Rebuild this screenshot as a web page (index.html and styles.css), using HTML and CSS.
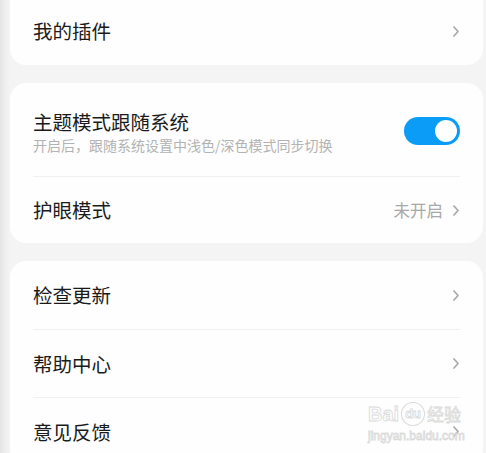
FILE: index.html
```html
<!DOCTYPE html>
<html lang="zh">
<head>
<meta charset="utf-8">
<link rel="stylesheet" href="styles.css">
</head>
<body>
<div class="page">
  <section class="card card-first">
    <div class="row">
      <span class="label">我的插件</span>
      <svg class="chev" viewBox="0 0 6 11" width="6" height="11"><polyline points="1,1 5,5.5 1,10"/></svg>
    </div>
  </section>

  <section class="card">
    <div class="row row-tall">
      <div class="texts">
        <span class="label">主题模式跟随系统</span>
        <span class="sub">开启后，跟随系统设置中浅色/深色模式同步切换</span>
      </div>
      <div class="toggle"><div class="knob"></div></div>
    </div>
    <div class="row">
      <span class="label">护眼模式</span>
      <div class="right">
        <span class="value">未开启</span>
        <svg class="chev" viewBox="0 0 6 11" width="6" height="11"><polyline points="1,1 5,5.5 1,10"/></svg>
      </div>
    </div>
  </section>

  <section class="card">
    <div class="row">
      <span class="label">检查更新</span>
      <svg class="chev" viewBox="0 0 6 11" width="6" height="11"><polyline points="1,1 5,5.5 1,10"/></svg>
    </div>
    <div class="row">
      <span class="label">帮助中心</span>
      <svg class="chev" viewBox="0 0 6 11" width="6" height="11"><polyline points="1,1 5,5.5 1,10"/></svg>
    </div>
    <div class="row">
      <span class="label">意见反馈</span>
      <svg class="chev" viewBox="0 0 6 11" width="6" height="11"><polyline points="1,1 5,5.5 1,10"/></svg>
    </div>
  </section>
</div>
<div class="watermark">
  <div class="wm-top"><span class="wm-bai">Bai</span><span class="wm-du">du</span><span class="wm-jy">经验</span></div>
  <div class="wm-url">jingyan.baidu.com</div>
</div>
</body>
</html>
```

FILE: styles.css
```css
html, body {
  margin: 0;
  padding: 0;
  height: 100%;
  overflow: hidden;
}
body {
  background: linear-gradient(to right, #e4e4e4 0px, #f0f0f0 6px, #f4f4f4 10px, #f4f4f4 100%);
  font-family: "Noto Sans CJK SC", "Noto Sans", sans-serif;
  color: #1b1b1b;
  position: relative;
}
.page {
  display: flex;
  flex-direction: column;
  gap: 18px;
  padding: 0 3px 0 10px;
}
.card {
  background: #fdfefd;
  border-radius: 16px;
  padding: 0 23px;
}
.card-first {
  margin-top: -20px;
  padding-top: 17px;
}
.row {
  height: 68px;
  display: flex;
  align-items: center;
  justify-content: space-between;
  border-top: 1px solid #f0f0f0;
  box-sizing: border-box;
}
.row:first-child {
  border-top: none;
}
.row-tall {
  height: 93px;
}
.card .row-tall + .row {
  height: 67px;
}
.label {
  font-size: 19.5px;
  line-height: 26px;
  letter-spacing: 0;
}
.texts {
  display: flex;
  flex-direction: column;
  gap: 0;
  padding-top: 4px;
}
.sub {
  font-size: 14px;
  line-height: 20px;
  color: #b3b3b3;
}
.right {
  display: flex;
  align-items: center;
  gap: 10px;
}
.value {
  font-size: 16.5px;
  color: #a8a8a8;
}
.chev {
  display: block;
  fill: none;
  stroke: #a9a9a9;
  stroke-width: 1.7;
  stroke-linecap: round;
  stroke-linejoin: round;
  margin-right: 1px;
}
.toggle {
  width: 56px;
  height: 28px;
  border-radius: 14px;
  background: #0a9cf6;
  display: flex;
  align-items: center;
  justify-content: flex-end;
  padding: 0 3px;
  box-sizing: border-box;
  margin-top: 2px;
}
.knob {
  width: 22px;
  height: 22px;
  border-radius: 50%;
  background: #ffffff;
}
.watermark {
  position: absolute;
  left: 368px;
  top: 402px;
  color: transparent;
  -webkit-text-stroke: 0.8px #dadada;
  font-family: "Liberation Sans", sans-serif;
  pointer-events: none;
}
.wm-top {
  display: flex;
  align-items: center;
  font-size: 20px;
  font-weight: bold;
  line-height: 22px;
}
.wm-du {
  font-size: 13px;
  border: 1px solid #dadada;
  border-radius: 50%;
  padding: 0 3px;
  margin: 0 2px;
}
.wm-jy {
  font-family: "Noto Sans CJK SC", sans-serif;
  font-size: 17px;
  font-weight: normal;
}
.wm-url {
  font-size: 12px;
  line-height: 16px;
  margin-top: 2px;
}
```
